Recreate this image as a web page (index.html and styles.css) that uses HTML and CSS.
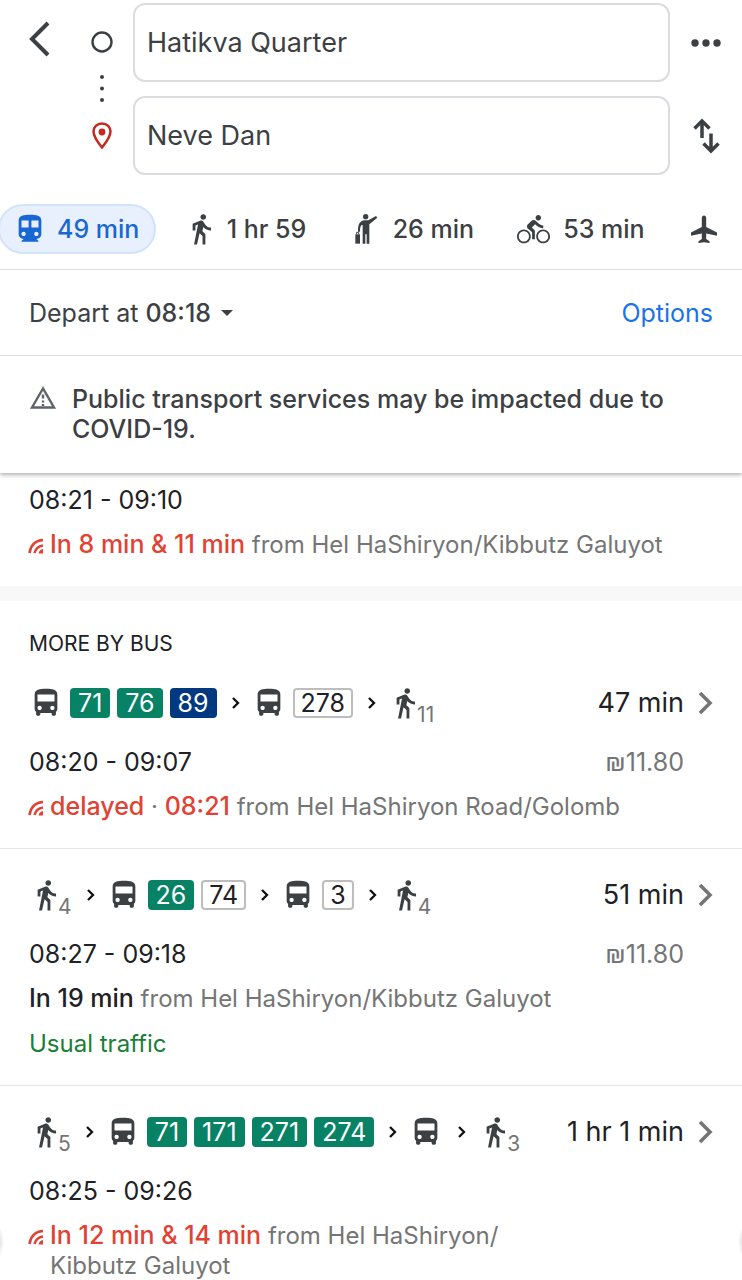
FILE: index.html
```
<!DOCTYPE html>
<html lang="en">
<head>
<meta charset="utf-8">
<meta name="viewport" content="width=device-width, initial-scale=1">
<title>Directions</title>
<link rel="stylesheet" href="styles.css">
</head>
<body>
<svg class="sprite" aria-hidden="true">
  <symbol id="walk" viewBox="0 0 21 24"><path d="M13.5 5.5c1.1 0 2-.9 2-2s-.9-2-2-2-2 .9-2 2 .9 2 2 2zM9.8 8.9L7 23h2.1l1.8-8 2.1 2v6h2v-7.5l-2.1-2 .6-3C14.8 12 16.8 13 19 13v-2c-1.9 0-3.5-1-4.3-2.4l-1-1.6c-.4-.6-1-1-1.7-1-.3 0-.5.1-.8.1L6 8.3V13h2V9.6l1.8-.7"/></symbol>
  <symbol id="bus" viewBox="0 0 24 24"><path d="M4 16c0 .88.39 1.67 1 2.22V20c0 .55.45 1 1 1h1c.55 0 1-.45 1-1v-1h8v1c0 .55.45 1 1 1h1c.55 0 1-.45 1-1v-1.78c.61-.55 1-1.34 1-2.22V6c0-3.5-3.58-4-8-4s-8 .5-8 4v10zm3.5 1c-.83 0-1.5-.67-1.5-1.5S6.670 14 7.500 14s1.500.67 1.500 1.500S8.330 17 7.500 17zm9 0c-.83 0-1.500-.67-1.500-1.500s.67-1.500 1.500-1.500 1.500.67 1.500 1.500-.67 1.500-1.500 1.500zm1.500-6H6V6h12v5z"/></symbol>
  <symbol id="next" viewBox="0 0 21 12"><path d="M9 1l5 5-5 5" fill="none" stroke="#111" stroke-width="2.300"/></symbol>
  <symbol id="more" viewBox="0 0 16 24"><path d="M3 2l10 10L3 22" fill="none" stroke="#757575" stroke-width="3.600"/></symbol>
  <symbol id="live" viewBox="0 0 16 16"><path d="M1.500 15C2.500 8 7 2.300 15 2M6.500 15c1-4 4-6.800 8.500-7.500" fill="none" stroke="#e14234" stroke-width="2.600"/><path d="M10.500 15.500c.5-2.500 2-4 4.500-4.500v4.500z" fill="#e14234"/></symbol>
</svg>

<header class="top">
  <form class="search">
    <button class="icon-button back" type="button" aria-label="Back">
      <svg width="24" height="36" viewBox="0 0 24 36"><path d="M20 2L4 18l16 16" fill="none" stroke="#3c4043" stroke-width="4"/></svg>
    </button>
    <div class="markers">
      <svg width="24" height="24" viewBox="0 0 24 24"><circle cx="12" cy="12" r="9.500" fill="none" stroke="#3c4043" stroke-width="2.400"/></svg>
      <svg width="6" height="28" viewBox="0 0 6 28" fill="#3c4043"><circle cx="3" cy="3" r="2"/><circle cx="3" cy="14.500" r="2"/><circle cx="3" cy="26" r="2"/></svg>
      <svg width="20" height="28" viewBox="0 0 20 28"><path d="M10 1.500C5 1.500 1.500 5 1.500 9.500c0 5.500 8.500 16 8.500 16s8.500-10.500 8.500-16c0-4.500-3.500-8-8.500-8z" fill="none" stroke="#c5291f" stroke-width="2.500"/><circle cx="10" cy="10" r="3.400" fill="#c5291f"/></svg>
    </div>
    <div class="fields">
      <input class="field" type="text" value="Hatikva Quarter" aria-label="Starting point">
      <input class="field" type="text" value="Neve Dan" aria-label="Destination">
    </div>
    <div class="actions">
      <button class="icon-button" type="button" aria-label="More options">
        <svg width="30" height="8" viewBox="0 0 30 8" fill="#3c4043"><circle cx="4" cy="4" r="3.700"/><circle cx="15" cy="4" r="3.700"/><circle cx="26" cy="4" r="3.700"/></svg>
      </button>
      <button class="icon-button" type="button" aria-label="Swap start and destination">
        <svg width="28" height="36" viewBox="0 0 28 36"><path d="M10 20V3.500M2.500 10.500L10 3l7.500 7.500M19 15.500V33M11.500 25.500L19 33l7.500-7.500" fill="none" stroke="#3c4043" stroke-width="3.500"/></svg>
      </button>
    </div>
  </form>

  <nav class="modes" aria-label="Travel mode">
    <button class="mode mode-active" type="button">
      <svg width="34" height="34" viewBox="0 0 24 24"><path d="M12 2c-4.420 0-8 .5-8 4v9.500C4 17.430 5.570 19 7.500 19L6 20.500v.5h12v-.5L16.500 19c1.930 0 3.500-1.570 3.500-3.500V6c0-3.500-3.580-4-8-4zM7.500 17c-.83 0-1.500-.67-1.500-1.500S6.670 14 7.500 14s1.500.67 1.500 1.500S8.330 17 7.500 17zm3.500-6H6V6h5v5zm5.500 6c-.83 0-1.500-.67-1.500-1.500s.67-1.500 1.500-1.500 1.500.67 1.500 1.500-.67 1.500-1.500 1.500zm1.500-6h-5V6h5v5z"/></svg>
      49 min
    </button>
    <button class="mode" type="button"><svg width="30" height="34"><use href="#walk"/></svg>1 hr 59</button>
    <button class="mode" type="button">
      <svg width="30" height="34" viewBox="-14 -5 90 102"><circle cx="33" cy="9" r="8"/><path d="M28 20h13l23-13 4 5-24 20v58h-8V62h-4v28h-8V34h-3c-4 3-5 10-5 20h-6c0-18 2-30 18-34z"/><path d="M2 62h14v28H2z"/><path d="M6 62v-6h6v6" fill="none" stroke="#3c4043" stroke-width="3"/></svg>
      26 min
    </button>
    <button class="mode" type="button">
      <svg width="33" height="33" viewBox="0 0 24 24"><path d="M15.500 5.500c1.100 0 2-.9 2-2s-.9-2-2-2-2 .9-2 2 .9 2 2 2zM5 12c-2.800 0-5 2.200-5 5s2.200 5 5 5 5-2.200 5-5-2.200-5-5-5zm0 8.700c-2.050 0-3.700-1.650-3.700-3.700s1.650-3.700 3.700-3.700 3.700 1.650 3.700 3.700-1.650 3.700-3.700 3.700zm5.800-10.200l2.400-2.400.8.8c1.300 1.300 3 2.100 5.100 2.100V9c-1.500 0-2.700-.6-3.600-1.500l-1.900-1.900c-.5-.4-1-.6-1.600-.6s-1.100.2-1.400.6L7.800 8.400c-.4.4-.6.9-.6 1.400 0 .6.2 1.100.6 1.400L11 14v5h2v-6.200l-2.200-2.300zM19 12c-2.800 0-5 2.200-5 5s2.200 5 5 5 5-2.200 5-5-2.200-5-5-5zm0 8.700c-2.050 0-3.700-1.650-3.700-3.700s1.650-3.700 3.700-3.700 3.700 1.650 3.700 3.700-1.650 3.700-3.700 3.700z"/></svg>
      53 min
    </button>
    <button class="mode" type="button" aria-label="Flights">
      <svg width="32" height="34" viewBox="0 0 32 34"><path d="M16 3.500c1.500 0 2.200 1.300 2.200 3v8.500L29 20.500v3.300l-10.800-2.300v5.500l3.300 2.300v1.700L16 30.200 10.500 31v-1.700l3.300-2.300v-5.500L3 23.800v-3.300L13.800 15V6.500c0-1.700.7-3 2.200-3z"/></svg>
    </button>
  </nav>

  <div class="depart">
    <button class="text-button" type="button"><span>Depart at <span class="strong">08:18</span></span><svg width="12" height="6" viewBox="0 0 12 6"><path d="M0 0h12L6 6z"/></svg></button>
    <a class="options" href="#">Options</a>
  </div>

  <div class="alert" role="alert">
    <svg width="28" height="28" viewBox="0 0 28 28"><path d="M14 4.500L3 23.500h22z" fill="none" stroke="#5f6368" stroke-width="2.400"/><path d="M14 10.500v4m0 2v2m0 1.500v2" stroke="#5f6368" stroke-width="2.400"/></svg>
    <p>Public transport services may be impacted due to COVID-19.</p>
  </div>
</header>

<main class="results">
  <section class="trip trip-first">
    <div class="time">08:21 - 09:10</div>
    <div class="status"><svg width="16" height="16"><use href="#live"/></svg><p><b class="late">In 8 min &amp; 11 min</b> from Hel HaShiryon/<wbr>Kibbutz&nbsp;Galuyot</p></div>
  </section>

  <h2 class="group-title">MORE BY BUS</h2>

  <section class="trip trip-lead">
    <div class="line">
      <div class="steps">
        <svg width="34" height="34"><use href="#bus"/></svg><span class="chip green">71</span><span class="chip green">76</span><span class="chip navy">89</span>
        <svg width="21" height="12"><use href="#next"/></svg>
        <svg width="34" height="34"><use href="#bus"/></svg><span class="chip">278</span>
        <svg width="21" height="12"><use href="#next"/></svg>
        <span class="walk"><svg width="30" height="34"><use href="#walk"/></svg><span class="minutes">11</span></span>
      </div>
      <a class="duration" href="#">47 min<svg width="16" height="24"><use href="#more"/></svg></a>
    </div>
    <div class="line"><span class="time">08:20 - 09:07</span><span class="price">₪11.80</span></div>
    <div class="status"><svg width="16" height="16"><use href="#live"/></svg><p><b class="late">delayed</b> · <b class="late">08:21</b> from Hel HaShiryon Road/<wbr>Golomb</p></div>
  </section>

  <section class="trip">
    <div class="line">
      <div class="steps">
        <span class="walk"><svg width="30" height="34"><use href="#walk"/></svg><span class="minutes">4</span></span>
        <svg width="21" height="12"><use href="#next"/></svg>
        <svg width="34" height="34"><use href="#bus"/></svg><span class="chip green">26</span><span class="chip">74</span>
        <svg width="21" height="12"><use href="#next"/></svg>
        <svg width="34" height="34"><use href="#bus"/></svg><span class="chip">3</span>
        <svg width="21" height="12"><use href="#next"/></svg>
        <span class="walk"><svg width="30" height="34"><use href="#walk"/></svg><span class="minutes">4</span></span>
      </div>
      <a class="duration" href="#">51 min<svg width="16" height="24"><use href="#more"/></svg></a>
    </div>
    <div class="line"><span class="time">08:27 - 09:18</span><span class="price">₪11.80</span></div>
    <div class="status"><p><b class="soon">In 19 min</b> from Hel HaShiryon/<wbr>Kibbutz&nbsp;Galuyot</p></div>
    <p class="traffic">Usual traffic</p>
  </section>

  <section class="trip">
    <div class="line">
      <div class="steps">
        <span class="walk"><svg width="30" height="34"><use href="#walk"/></svg><span class="minutes">5</span></span>
        <svg width="21" height="12"><use href="#next"/></svg>
        <svg width="34" height="34"><use href="#bus"/></svg><span class="chip green">71</span><span class="chip green">171</span><span class="chip green">271</span><span class="chip green">274</span>
        <svg width="21" height="12"><use href="#next"/></svg>
        <svg width="34" height="34"><use href="#bus"/></svg>
        <svg width="21" height="12"><use href="#next"/></svg>
        <span class="walk"><svg width="30" height="34"><use href="#walk"/></svg><span class="minutes">3</span></span>
      </div>
      <a class="duration" href="#">1 hr 1 min<svg width="16" height="24"><use href="#more"/></svg></a>
    </div>
    <div class="time">08:25 - 09:26</div>
    <div class="status"><svg width="16" height="16"><use href="#live"/></svg><p><b class="late">In 12 min &amp; 14 min</b> from Hel HaShiryon/<wbr>Kibbutz&nbsp;Galuyot</p></div>
  </section>
</main>
</body>
</html>
```
FILE: styles.css
```
* { box-sizing: border-box; }
body {
  margin: 0;
  background: #fff;
  color: #202124;
  font: 400 25px/30px Inter, "Liberation Sans", sans-serif;
  overflow-x: hidden;
}
p, h2 { margin: 0; }
a { color: inherit; text-decoration: none; }
button {
  border: 0;
  padding: 0;
  background: none;
  color: inherit;
  font: inherit;
}
svg { display: block; flex: none; fill: #3c4043; }
b, .strong { font-weight: 500; }
.sprite { position: absolute; width: 0; height: 0; }

.top {
  position: relative;
  color: #3c4043;
  box-shadow: 0 2px 4px rgba(0, 0, 0, .3);
}
.search {
  display: grid;
  grid-template-columns: 80px 44px 1fr 72px;
  padding-top: 3px;
}
.search .fields { margin-left: 9px; }
.icon-button { display: grid; place-items: center; }
.back { height: 72px; }
.markers {
  display: flex;
  flex-direction: column;
  align-items: center;
  gap: 20px;
  padding-top: 27px;
}
.fields { display: grid; gap: 14px; }
.field {
  width: 100%;
  height: 79px;
  padding: 0 12px;
  border: 2px solid #dadce0;
  border-radius: 12px;
  background: #fff;
  color: #3c4043;
  font: inherit;
  font-size: 27px;
}
.actions { display: grid; grid-template-rows: 1fr 1fr; gap: 14px; }

.modes {
  display: flex;
  justify-content: space-between;
  padding: 29px 6px 15px 0;
  border-bottom: 1px solid #dadce0;
}
.mode {
  display: flex;
  align-items: center;
  gap: 13px;
  height: 50px;
  padding: 0 16px;
  font-weight: 500;
  white-space: nowrap;
}
.mode-active {
  gap: 10px;
  margin-left: -2px;
  padding: 0 15px 0 13px;
  border: 2px solid #d2e3fc;
  border-radius: 25px;
  background: #e8f0fe;
  color: #1967d2;
}
.mode-active svg { fill: #1967d2; }

.depart {
  display: flex;
  justify-content: space-between;
  align-items: center;
  height: 86px;
  padding: 0 29px;
  border-bottom: 1px solid #dadce0;
}
.text-button { display: flex; align-items: center; gap: 10px; }
.options { color: #1a73e8; }

.alert {
  display: flex;
  gap: 15px;
  padding: 28px 58px 29px 29px;
  font-weight: 500;
}

.results::before,
.results::after {
  content: "";
  position: fixed;
  bottom: 18px;
  left: -20px;
  width: 24px;
  height: 40px;
  background: radial-gradient(closest-side, rgba(0, 0, 0, .3), transparent);
}
.results::after { left: auto; right: -20px; }

.trip {
  display: flex;
  flex-direction: column;
  gap: 15px;
  padding: 31px 29px 26px;
  border-top: 1px solid #e4e5e7;
}
.trip-first { padding-top: 12px; border-top: 0; }
.trip-lead { padding-top: 29px; border-top: 0; }
.line {
  display: flex;
  justify-content: space-between;
  align-items: center;
  height: 30px;
}
.line + .line, .line + .time { margin-top: 14px; }
.steps { display: flex; align-items: center; gap: 7px; }
.chip {
  height: 30px;
  padding: 0 8px;
  border-radius: 4px;
  line-height: 30px;
  box-shadow: inset 0 0 0 2px #bdbdbd;
}
.green { background: #088265; color: #fff; box-shadow: none; }
.navy { background: #00397f; color: #fff; box-shadow: none; }
.walk { display: flex; align-items: flex-start; height: 34px; }
.minutes {
  margin-left: -1px;
  padding-top: 14px;
  color: #757575;
  font-size: 21px;
}
.duration {
  display: flex;
  align-items: center;
  gap: 13px;
  font-size: 27px;
  white-space: nowrap;
}
.price { margin-right: 29px; color: #757575; }
.status {
  display: flex;
  gap: 6px;
  padding-right: 40px;
  color: #757575;
  font-size: 24px;
}
.status svg { margin: 8px 0 0 -1px; }
.status b { font-size: 25px; line-height: 24px; }
.late { color: #e14234; }
.soon { color: #202124; }
.traffic { color: #188038; font-size: 24px; }

.group-title {
  padding: 28px 29px 0;
  border-top: 15px solid #f8f8f8;
  font-size: 21px;
  font-weight: 400;
}
```
